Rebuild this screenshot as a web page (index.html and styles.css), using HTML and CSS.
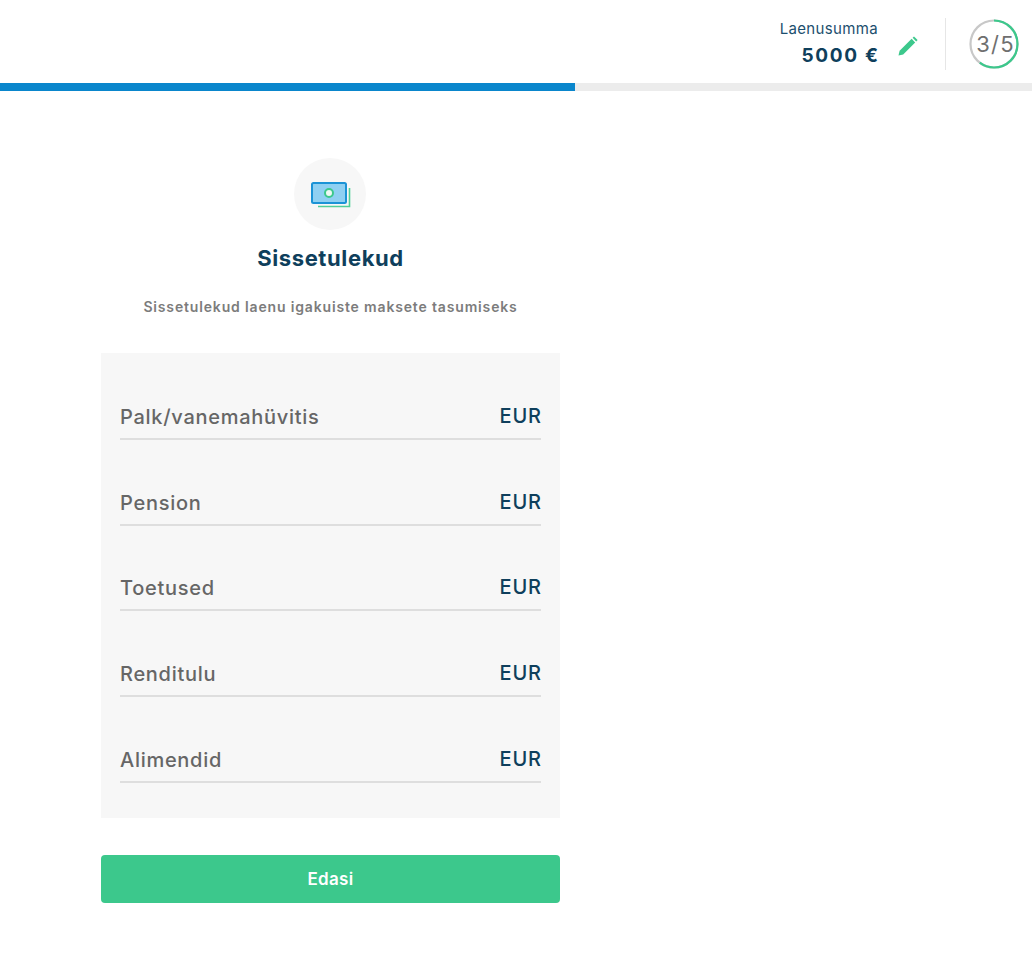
FILE: index.html
```html
<!DOCTYPE html>
<html lang="et">
<head>
    <meta charset="UTF-8">
    <meta name="viewport" content="width=device-width, initial-scale=1.0">
    <title>Sissetulekud</title>
    <link rel="stylesheet" href="styles.css">
</head>
<body>
    <header class="topbar">
        <div class="amount">
            <span class="amount-label">Laenusumma</span>
            <strong class="amount-value">5000 €</strong>
        </div>
        <svg class="pencil" width="20" height="20" viewBox="0 0 20 20">
            <path d="M0.5 19.5 L1.6 14.8 L13.6 2.8 L17.2 6.4 L5.2 18.4 Z" fill="#3cc88c"/>
            <path d="M14.6 1.8 L16 0.4 L19.6 4 L18.2 5.4 Z" fill="#3cc88c"/>
        </svg>
        <div class="divider"></div>
        <div class="step">
            <svg class="step-ring" width="50" height="50" viewBox="0 0 50 50">
                <circle cx="25" cy="25" r="23.5" fill="none" stroke="#c8c8c8" stroke-width="2.2"/>
                <circle cx="25" cy="25" r="23.5" fill="none" stroke="#3cc88c" stroke-width="2.2" stroke-dasharray="88.6 147.7" transform="rotate(-90 25 25)"/>
            </svg>
            <span class="step-text">3/5</span>
        </div>
    </header>
    <div class="progress"><div class="progress-fill" style="width: 575px"></div></div>

    <main class="content">
        <div class="icon-circle">
            <svg class="money" width="40" height="26" viewBox="0 0 40 26">
                <path d="M38.5 6 V24.5 H7" fill="none" stroke="#4fcf98" stroke-width="1.6"/>
                <rect x="1" y="1" width="34" height="20" rx="1.5" fill="#8fd0f2" stroke="#1b93d6" stroke-width="2"/>
                <circle cx="18" cy="11" r="4" fill="#eef8f4" stroke="#3cc88c" stroke-width="2"/>
            </svg>
        </div>
        <h1>Sissetulekud</h1>
        <p class="lead">Sissetulekud laenu igakuiste maksete tasumiseks</p>

        <form class="panel">
            <div class="field"><span class="field-label">Palk/vanemahüvitis</span><span class="field-unit">EUR</span></div>
            <div class="field"><span class="field-label">Pension</span><span class="field-unit">EUR</span></div>
            <div class="field"><span class="field-label">Toetused</span><span class="field-unit">EUR</span></div>
            <div class="field"><span class="field-label">Renditulu</span><span class="field-unit">EUR</span></div>
            <div class="field"><span class="field-label">Alimendid</span><span class="field-unit">EUR</span></div>
        </form>
        <button class="next" type="button">Edasi</button>
    </main>
</body>
</html>
```

FILE: styles.css
```css
body {
    font-family: Inter, "Open Sans", sans-serif;
    background-color: #fff;
    color: #0f3f5c;
    margin: 0;
    padding: 0;
}
.topbar {
    display: flex;
    justify-content: flex-end;
    align-items: center;
    height: 83px;
    padding: 5px 13px 0 0;
    box-sizing: border-box;
}
.amount {
    display: flex;
    flex-direction: column;
    align-items: flex-end;
    padding-top: 2px;
}
.amount-label {
    font-size: 15px;
    line-height: 20px;
    letter-spacing: 0.35px;
    color: #1c4f6e;
}
.amount-value {
    margin: 2px -1.7px 0 0;
    font-size: 19px;
    line-height: 30px;
    font-weight: 700;
    letter-spacing: 1.7px;
}
.pencil {
    margin: 4px 0 0 20px;
}
.divider {
    width: 1px;
    height: 52px;
    margin: 0 23px 0 27px;
    background: #e6e6e6;
}
.step {
    display: flex;
    justify-content: center;
    align-items: center;
    position: relative;
    width: 50px;
    height: 50px;
}
.step-ring {
    position: absolute;
    top: 0;
    left: 0;
}
.step-text {
    padding-left: 3px;
    font-size: 22px;
    letter-spacing: 1.2px;
    color: #6f6f6f;
}
.progress {
    height: 8px;
    background: #ececec;
}
.progress-fill {
    height: 8px;
    background: #0a86cc;
}
.content {
    display: flex;
    flex-direction: column;
    align-items: center;
    width: 459px;
    margin-left: 101px;
    padding-top: 67px;
}
.icon-circle {
    display: flex;
    justify-content: center;
    align-items: center;
    width: 72px;
    height: 72px;
    margin-right: 1px;
    border-radius: 50%;
    background: #f7f7f7;
}
.money {
    margin: 2px 0 0 1px;
}
h1 {
    margin: 14px 0 0;
    font-size: 22px;
    line-height: 28px;
    font-weight: 700;
    letter-spacing: 0.62px;
    color: #0f3f5c;
}
.lead {
    margin: 26px 0 0;
    font-size: 14px;
    line-height: 18px;
    font-weight: 600;
    letter-spacing: 0.84px;
    color: #7c7c7c;
}
.panel {
    align-self: stretch;
    box-sizing: border-box;
    height: 465px;
    margin-top: 37px;
    padding: 1px 19px 0;
    background: #f7f7f7;
}
.field {
    display: flex;
    justify-content: space-between;
    align-items: center;
    box-sizing: border-box;
    height: 85.75px;
    padding-top: 42px;
    border-bottom: 2px solid #dedede;
}
.field-label {
    font-size: 20px;
    font-weight: 500;
    letter-spacing: 0.72px;
    color: #666;
}
.field-unit {
    margin: 0 -0.8px 2px 0;
    font-size: 20px;
    font-weight: 500;
    letter-spacing: 0.8px;
    color: #0f3f5c;
}
.next {
    align-self: stretch;
    height: 48px;
    margin-top: 37px;
    border: none;
    border-radius: 4px;
    background-color: #3cc88c;
    color: #fff;
    font-family: inherit;
    font-size: 17px;
    font-weight: 600;
    letter-spacing: 0.3px;
}
```
